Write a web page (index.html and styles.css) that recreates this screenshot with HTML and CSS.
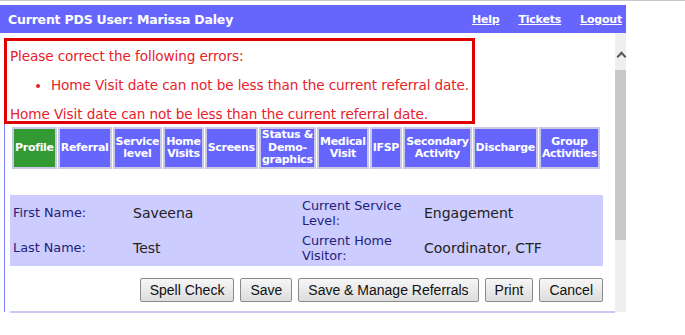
FILE: index.html
```html
<!DOCTYPE html>
<html>
<head>
<meta charset="utf-8">
<link rel="stylesheet" href="styles.css">
</head>
<body>
<div class="topline"></div>
<div class="frame">
  <div class="bar">
    <span class="user">Current PDS User: Marissa Daley</span>
    <nav class="links"><a href="#">Help</a><a href="#">Tickets</a><a href="#">Logout</a></nav>
  </div>
  <div class="main">
    <div class="content">
      <div class="errors">
        <div class="err-line">Please correct the following errors:</div>
        <ul class="err-list"><li>Home Visit date can not be less than the current referral date.</li></ul>
        <div class="err-line">Home Visit date can not be less than the current referral date.</div>
      </div>
      <div class="page">
        <div class="tabs">
          <div class="tab active">Profile</div>
          <div class="tab">Referral</div>
          <div class="tab">Service<br>level</div>
          <div class="tab">Home<br>Visits</div>
          <div class="tab">Screens</div>
          <div class="tab">Status &amp;<br>Demo-<br>graphics</div>
          <div class="tab">Medical<br>Visit</div>
          <div class="tab">IFSP</div>
          <div class="tab">Secondary<br>Activity</div>
          <div class="tab">Discharge</div>
          <div class="tab">Group<br>Activities</div>
        </div>
        <div class="info">
          <div class="row">
            <div class="lbl">First Name:</div>
            <div class="val">Saveena</div>
            <div class="lbl lbl2">Current Service Level:</div>
            <div class="val val2">Engagement</div>
          </div>
          <div class="row">
            <div class="lbl">Last Name:</div>
            <div class="val">Test</div>
            <div class="lbl lbl2">Current Home Visitor:</div>
            <div class="val val2">Coordinator, CTF</div>
          </div>
        </div>
        <div class="buttons">
          <button class="btn">Spell Check</button>
          <button class="btn">Save</button>
          <button class="btn">Save &amp; Manage Referrals</button>
          <button class="btn">Print</button>
          <button class="btn">Cancel</button>
        </div>
        <div class="bottomline"></div>
      </div>
    </div>
    <div class="scrollbar">
      <div class="arrow"></div>
      <div class="thumb"></div>
    </div>
  </div>
</div>
</body>
</html>
```

FILE: styles.css
```css
html, body { margin: 0; padding: 0; background: #fff; }
body { width: 685px; height: 335px; overflow: hidden; font-family: "DejaVu Sans", Verdana, sans-serif; }
.topline { height: 1px; background: #c8c8c8; }
.frame { width: 626px; margin-top: 4px; }
.bar {
  height: 28px; background: #6666ff; color: #fff;
  display: flex; align-items: center; justify-content: space-between;
  padding: 0 4px 0 8px; box-sizing: border-box;
}
.user { font-weight: bold; font-size: 12.5px; letter-spacing: -0.2px; }
.links { display: flex; gap: 19px; }
.links a { color: #fff; font-weight: bold; font-size: 11px; text-decoration: underline; letter-spacing: -0.2px; }
.main { display: flex; height: 279px; }
.content { width: 615px; flex: none; padding-top: 5px; box-sizing: border-box; }
.errors {
  margin-left: 4px; width: 471px; height: 86px; box-sizing: border-box;
  border: 3px solid #e00000; color: #e8202a; font-size: 13.6px;
  padding: 7px 0 0 3px; letter-spacing: -0.1px;
}
.err-line { line-height: 17px; }
.err-list { margin: 12px 0 12px 0; padding-left: 41px; line-height: 17px; }
.page { margin-left: 4px; border-left: 1px solid #8080ff; height: 188px; padding: 3px 0 0 7px; box-sizing: border-box; }
.tabs { display: flex; gap: 1px; height: 42px; }
.tab {
  background: #6666ff; color: #fff; font-weight: bold; font-size: 11px; line-height: 12.5px;
  border: 2px solid #c8c8e8; padding: 0 1px; display: flex; align-items: center; justify-content: center;
  text-align: center; letter-spacing: -0.3px; white-space: nowrap;
}
.tab.active { background: #339933; }
.info { margin: 26px 0 0 -2px; width: 593px; height: 71px; background: #ccccff; box-sizing: border-box; padding-left: 3px; }
.row { display: flex; align-items: center; height: 35px; }
.lbl { width: 120px; flex: none; color: #22227a; font-size: 12.8px; line-height: 15px; }
.lbl2 { width: 110px; padding-right: 12px; }
.val { width: 169px; flex: none; color: #222; font-size: 14px; white-space: nowrap; }
.val2 { width: auto; }
.buttons { display: flex; justify-content: flex-end; gap: 6px; width: 591px; margin-top: 12px; }
.btn {
  font-family: "Liberation Sans", Arial, sans-serif; font-size: 14px; color: #111;
  height: 24px; padding: 0 9px; border: 1px solid #8a8a8a; border-radius: 2px;
  background: linear-gradient(#f6f6f6, #dddddd); margin: 0;
}
.bottomline { margin: 9px 0 0 -2px; height: 2px; width: 605px; background: #c8c8f0; }
.scrollbar { width: 11px; background: #efefef; height: 279px; }
.arrow {
  width: 5px; height: 5px; border-left: 2px solid #555; border-top: 2px solid #555;
  transform: rotate(45deg); margin: 20px 0 0 3px;
}
.thumb { margin-top: 10px; height: 170px; background: #c8c8c8; }
```
